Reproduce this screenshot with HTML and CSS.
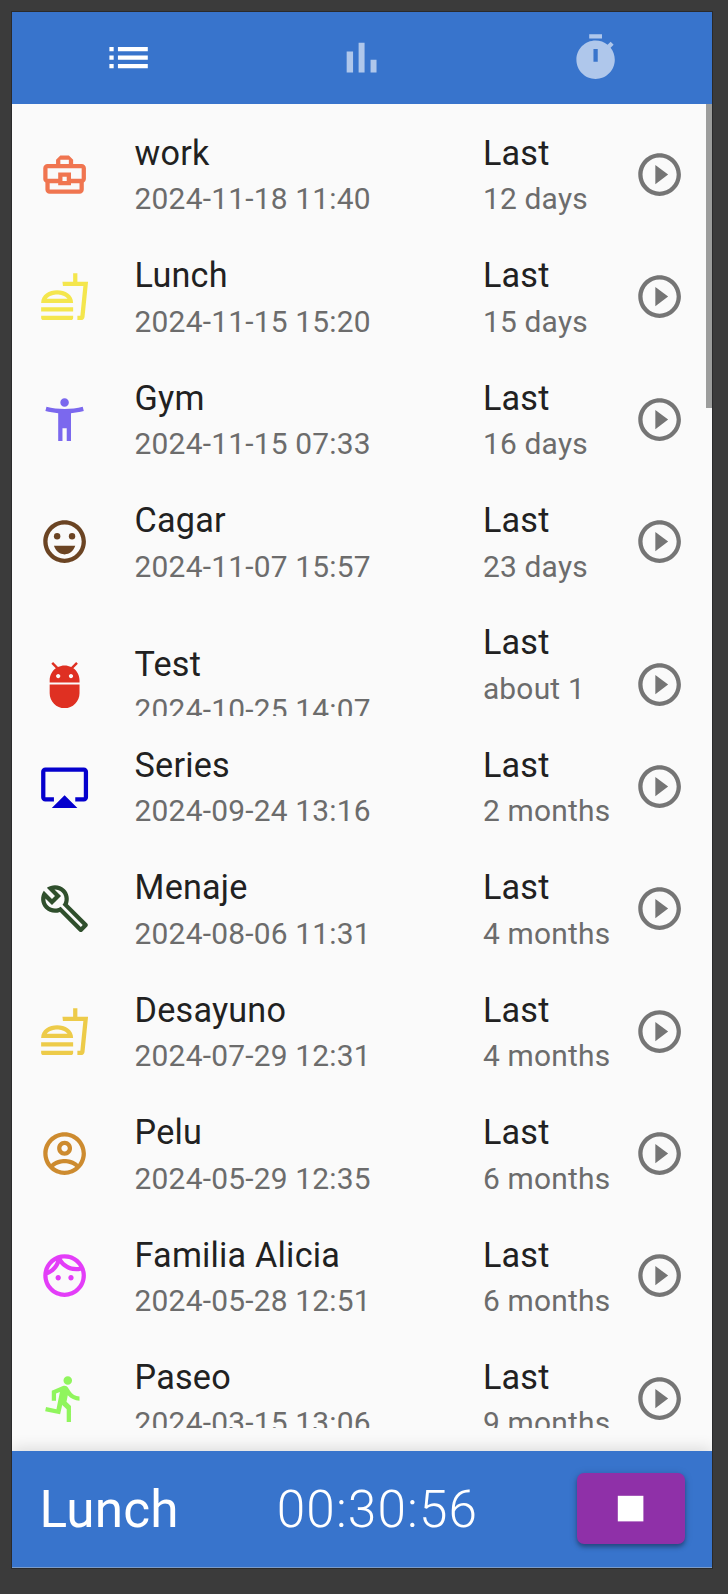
FILE: index.html
```html
<!DOCTYPE html>
<html lang="en">
<head>
<meta charset="utf-8">
<title>Time tracker</title>
<link rel="stylesheet" href="styles.css">
</head>
<body>
<svg class="sprite" aria-hidden="true">
  <symbol id="play" viewBox="0 0 24 24"><path d="M10 16.5l6-4.5-6-4.5v9zM12 2C6.48 2 2 6.48 2 12s4.48 10 10 10 10-4.48 10-10S17.52 2 12 2zm0 18c-4.41 0-8-3.59-8-8s3.59-8 8-8 8 3.59 8 8-3.59 8-8 8z"/></symbol>
  <symbol id="food" viewBox="0 0 24 24"><path d="M1 21.98c0 .56.45 1.01 1.01 1.01H15c.56 0 1.01-.45 1.01-1.01V21H1v.98zM8.5 8.99C4.75 8.99 1 11 1 15h15c-.01-4.01-3.76-6.01-7.5-6.01zM3.62 13c1.11-1.55 3.47-2.01 4.88-2.01s3.77.46 4.88 2.01H3.62zM1 17h15v2H1zM18 5V1h-2v4h-5l.23 2h9.56l-1.4 14H18v2h1.72c.84 0 1.53-.65 1.63-1.47L23 5h-5z"/></symbol>
</svg>
<div class="app">
  <nav class="tabs">
    <a class="tab active"><svg class="icon" viewBox="0 0 24 24"><path d="M3 13h2v-2H3v2zm0 4h2v-2H3v2zm0-8h2V7H3v2zm4 4h14v-2H7v2zm0 4h14v-2H7v2zM7 7v2h14V7H7z"/></svg></a>
    <a class="tab"><svg class="icon" viewBox="0 0 24 24"><path d="M5 9.2h3V19H5zM10.6 5h2.8v14h-2.8zm5.6 8H19v6h-2.8z"/></svg></a>
    <a class="tab"><svg class="icon" viewBox="0 0 24 24"><path fill-rule="evenodd" d="M15 1H9v2h6V1zm-4 13h2V8h-2v6zm8.03-6.61l1.42-1.42c-.43-.51-.9-.99-1.41-1.41l-1.42 1.42C16.07 4.74 14.12 4 12 4c-4.97 0-9 4.03-9 9s4.02 9 9 9 9-4.03 9-9c0-2.12-.74-4.07-1.97-5.61z"/></svg></a>
  </nav>
  <main class="viewport">
    <ul class="list">
      <li class="row"><div class="inner">
        <svg class="icon coral" viewBox="0 0 24 24"><path d="M20 7h-4V5l-2-2h-4L8 5v2H4c-1.1 0-2 .9-2 2v5c0 .75.4 1.38 1 1.73V19c0 1.11.89 2 2 2h14c1.11 0 2-.89 2-2v-3.28c.59-.35 1-.99 1-1.72V9c0-1.1-.9-2-2-2zM10 5h4v2h-4V5zM4 9h16v5h-5v-3H9v3H4V9zm9 6h-2v-2h2v2zm6 4H5v-3h4v1h6v-1h4v3z"/></svg>
        <div class="text"><p class="title">work</p><p class="sub">2024-11-18 11:40</p></div>
        <div class="last"><p class="title">Last</p><p class="sub">12 days</p></div>
        <svg class="icon play"><use href="#play"/></svg>
      </div></li>
      <li class="row"><div class="inner">
        <svg class="icon yellow"><use href="#food"/></svg>
        <div class="text"><p class="title">Lunch</p><p class="sub">2024-11-15 15:20</p></div>
        <div class="last"><p class="title">Last</p><p class="sub">15 days</p></div>
        <svg class="icon play"><use href="#play"/></svg>
      </div></li>
      <li class="row"><div class="inner">
        <svg class="icon violet" viewBox="0 0 24 24"><path d="M20.5 6c-2.61.7-5.67 1-8.5 1s-5.89-.3-8.5-1L3 8c1.86.5 4 .83 6 1v13h2v-6h2v6h2V9c2-.17 4.14-.5 6-1l-.5-2zM12 6c1.1 0 2-.9 2-2s-.9-2-2-2-2 .9-2 2 .9 2 2 2z"/></svg>
        <div class="text"><p class="title">Gym</p><p class="sub">2024-11-15 07:33</p></div>
        <div class="last"><p class="title">Last</p><p class="sub">16 days</p></div>
        <svg class="icon play"><use href="#play"/></svg>
      </div></li>
      <li class="row"><div class="inner">
        <svg class="icon brown" viewBox="0 0 24 24"><circle cx="8.5" cy="9.5" r="1.5"/><circle cx="15.5" cy="9.5" r="1.5"/><path d="M12 18c2.28 0 4.22-1.66 5-4H7c.78 2.34 2.72 4 5 4zM12 2C6.48 2 2 6.48 2 12s4.48 10 10 10 10-4.48 10-10S17.52 2 12 2zm0 18c-4.41 0-8-3.59-8-8s3.59-8 8-8 8 3.59 8 8-3.59 8-8 8z"/></svg>
        <div class="text"><p class="title">Cagar</p><p class="sub">2024-11-07 15:57</p></div>
        <div class="last"><p class="title">Last</p><p class="sub">23 days</p></div>
        <svg class="icon play"><use href="#play"/></svg>
      </div></li>
      <li class="row"><div class="inner">
        <svg class="icon red" viewBox="0 0 24 24"><path d="M5 16c0 3.87 3.13 7 7 7s7-3.13 7-7v-4H5v4zM16.12 4.37l2.1-2.1-.82-.83-2.3 2.31C14.16 3.28 13.12 3 12 3s-2.16.28-3.09.75L6.6 1.44l-.82.83 2.1 2.1C6.14 5.64 5 7.68 5 10v1h14v-1c0-2.32-1.14-4.36-2.88-5.63zM9 9c-.55 0-1-.45-1-1s.45-1 1-1 1 .45 1 1-.45 1-1 1zm6 0c-.55 0-1-.45-1-1s.45-1 1-1 1 .45 1 1-.45 1-1 1z"/></svg>
        <div class="text"><p class="title">Test</p><p class="sub">2024-10-25 14:07</p></div>
        <div class="last"><p class="title">Last</p><p class="sub two-line">about 1</p></div>
        <svg class="icon play"><use href="#play"/></svg>
      </div></li>
      <li class="row"><div class="inner">
        <svg class="icon blue" viewBox="0 0 24 24"><path d="M6 22h12l-6-6zM21 3H3c-1.1 0-2 .9-2 2v12c0 1.1.9 2 2 2h4v-2H3V5h18v12h-4v2h4c1.1 0 2-.9 2-2V5c0-1.1-.9-2-2-2z"/></svg>
        <div class="text"><p class="title">Series</p><p class="sub">2024-09-24 13:16</p></div>
        <div class="last"><p class="title">Last</p><p class="sub">2 months</p></div>
        <svg class="icon play"><use href="#play"/></svg>
      </div></li>
      <li class="row"><div class="inner">
        <svg class="icon forest" viewBox="0 0 24 24"><path d="M22.61 18.99l-9.08-9.08c.93-2.34.45-5.1-1.44-7C9.79.61 6.21.4 3.66 2.26L7.5 6.11 6.08 7.52 2.25 3.69C.39 6.23.6 9.82 2.9 12.11c1.86 1.86 4.57 2.35 6.89 1.48l9.11 9.11c.39.39 1.02.39 1.41 0l2.3-2.3c.4-.38.4-1.01 0-1.41zm-3 1.6l-9.46-9.46c-.61.45-1.29.72-2 .82-1.36.2-2.79-.21-3.83-1.25C3.37 9.76 2.93 8.5 3 7.26l3.09 3.09 4.24-4.24-3.09-3.09c1.24-.07 2.49.37 3.44 1.31 1.08 1.08 1.49 2.57 1.24 3.96-.12.71-.42 1.37-.88 1.96l9.45 9.45-.88.89z"/></svg>
        <div class="text"><p class="title">Menaje</p><p class="sub">2024-08-06 11:31</p></div>
        <div class="last"><p class="title">Last</p><p class="sub">4 months</p></div>
        <svg class="icon play"><use href="#play"/></svg>
      </div></li>
      <li class="row"><div class="inner">
        <svg class="icon gold"><use href="#food"/></svg>
        <div class="text"><p class="title">Desayuno</p><p class="sub">2024-07-29 12:31</p></div>
        <div class="last"><p class="title">Last</p><p class="sub">4 months</p></div>
        <svg class="icon play"><use href="#play"/></svg>
      </div></li>
      <li class="row"><div class="inner">
        <svg class="icon ochre" viewBox="0 0 24 24"><path d="M12 2C6.48 2 2 6.48 2 12s4.48 10 10 10 10-4.48 10-10S17.52 2 12 2zM7.07 18.28c.43-.9 3.05-1.78 4.93-1.78s4.51.88 4.93 1.78C15.57 19.36 13.86 20 12 20s-3.57-.64-4.93-1.72zm11.29-1.45c-1.43-1.74-4.9-2.33-6.36-2.33s-4.93.59-6.36 2.33C4.62 15.49 4 13.82 4 12c0-4.41 3.59-8 8-8s8 3.59 8 8c0 1.82-.62 3.49-1.64 4.83zM12 6c-1.94 0-3.5 1.56-3.5 3.5S10.06 13 12 13s3.5-1.56 3.5-3.5S13.94 6 12 6zm0 5c-.83 0-1.5-.67-1.5-1.5S11.17 8 12 8s1.5.67 1.5 1.5S12.83 11 12 11z"/></svg>
        <div class="text"><p class="title">Pelu</p><p class="sub">2024-05-29 12:35</p></div>
        <div class="last"><p class="title">Last</p><p class="sub">6 months</p></div>
        <svg class="icon play"><use href="#play"/></svg>
      </div></li>
      <li class="row"><div class="inner">
        <svg class="icon magenta" viewBox="0 0 24 24"><path d="M10.25 13c0 .69-.56 1.25-1.25 1.25S7.75 13.69 7.75 13s.56-1.25 1.25-1.25 1.25.56 1.25 1.25zM15 11.75c-.69 0-1.25.56-1.25 1.25s.56 1.25 1.25 1.25 1.25-.56 1.25-1.25-.56-1.25-1.25-1.25zm7 .25c0 5.52-4.48 10-10 10S2 17.52 2 12 6.48 2 12 2s10 4.48 10 10zM10.66 4.12C12.06 6.44 14.6 8 17.5 8c.46 0 .91-.05 1.34-.12C17.44 5.56 14.9 4 12 4c-.46 0-.91.05-1.34.12zM4.42 9.47c1.71-.97 3.03-2.55 3.66-4.44C6.37 6 5.05 7.58 4.42 9.47zM20 12c0-.78-.12-1.53-.33-2.24-.7.15-1.42.24-2.17.24-3.13 0-5.92-1.44-7.76-3.69C8.69 8.87 6.6 10.88 4 11.86c.01.04 0 .09 0 .14 0 4.42 3.58 8 8 8s8-3.58 8-8z"/></svg>
        <div class="text"><p class="title">Familia Alicia</p><p class="sub">2024-05-28 12:51</p></div>
        <div class="last"><p class="title">Last</p><p class="sub">6 months</p></div>
        <svg class="icon play"><use href="#play"/></svg>
      </div></li>
      <li class="row"><div class="inner">
        <svg class="icon lime" viewBox="0 0 24 24"><path d="M13.49 5.48c1.1 0 2-.9 2-2s-.9-2-2-2-2 .9-2 2 .9 2 2 2zm-3.6 13.9l1-4.4 2.1 2v6h2v-7.5l-2.1-2 .6-3c1.3 1.5 3.3 2.5 5.5 2.5v-2c-1.9 0-3.5-1-4.3-2.4l-1-1.6c-.4-.6-1-1-1.7-1-.3 0-.5.1-.8.1l-5.2 2.2v4.7h2v-3.4l1.8-.7-1.6 8.1-4.9-1-.4 2 7 1.4z"/></svg>
        <div class="text"><p class="title">Paseo</p><p class="sub">2024-03-15 13:06</p></div>
        <div class="last"><p class="title">Last</p><p class="sub">9 months</p></div>
        <svg class="icon play"><use href="#play"/></svg>
      </div></li>
    </ul>
    <div class="thumb"></div>
  </main>
  <footer class="bar">
    <span class="name">Lunch</span>
    <span class="clock">00:30:56</span>
    <button class="stop" aria-label="Stop"><svg class="icon" viewBox="0 0 24 24"><path d="M6 6h12v12H6z"/></svg></button>
  </footer>
</div>
</body>
</html>
```

FILE: styles.css
```css
* { box-sizing: border-box; }
body {
  margin: 0;
  height: 1594px;
  padding: 12px 16px 0 12px;
  overflow: hidden;
  background: #3b3b3b;
  font-family: Roboto, "Liberation Sans", sans-serif;
}
.sprite { position: absolute; width: 0; height: 0; }
.app {
  display: flex;
  flex-direction: column;
  width: 700px;
  height: 1556px;
  background: #fafafa;
  box-shadow: 0 0 0 1px #2a2a2b;
}
.icon { display: block; width: 51.2px; height: 51.2px; fill: currentColor; flex: none; }
.tabs {
  display: grid;
  grid-template-columns: repeat(3, 1fr);
  height: 91.6px;
  flex: none;
  background: #3874cc;
  color: #fff;
}
.tab { display: flex; align-items: center; justify-content: center; color: #afc7eb; }
.tab.active { color: #fff; }
.viewport {
  position: relative;
  height: 1347.4px;
  flex: none;
}
.list {
  display: flex;
  flex-direction: column;
  gap: 18.4px;
  height: 1324.4px;
  margin: 0;
  padding: 18.8px 0 0;
  overflow: hidden;
  list-style: none;
}
.row { height: 104px; flex: none; overflow: hidden; }
.inner {
  display: grid;
  grid-template-columns: 51.2px 348.6px 195.2px 51.2px;
  align-items: center;
  min-height: 104px;
  padding: 5px 27px 5px 27.1px;
}
.text { padding-left: 44.3px; }
.last { width: 130px; margin-left: 44px; }
.title, .sub { margin: 0; }
.title { padding-top: 0.3px; font-size: 34.2px; line-height: 51.3px; letter-spacing: 0.2px; color: #212121; }
.sub { margin-top: -0.9px; font-size: 29.9px; line-height: 42.7px; letter-spacing: 0.22px; color: #6c6c6c; }
.two-line { min-height: 85.4px; }
.play { color: #757575; }
.thumb {
  position: absolute;
  top: 0;
  right: 0;
  width: 6.5px;
  height: 304px;
  background: #9c9d9c;
}
.coral { color: #f07550; }
.yellow { color: #f4e64d; }
.violet { color: #7b68ee; }
.brown { color: #6b4423; }
.red { color: #df3022; }
.blue { color: #0500cd; }
.forest { color: #2f4f2c; }
.gold { color: #edcb49; }
.ochre { color: #cd8b2f; }
.magenta { color: #e33df8; }
.lime { color: #90f55d; }
.bar {
  position: relative;
  display: grid;
  grid-template-columns: 237.2px 1fr 108.5px;
  align-items: center;
  flex: 1;
  padding: 0 27px 0 27.5px;
  background: #3874cc;
  border-bottom: 1px solid #7b9cc9;
  color: #fff;
  box-shadow: 0 -3px 14px rgba(0, 0, 0, .12);
  clip-path: inset(-40px 0 0 0);
}
.name, .clock { padding-top: 2px; font-size: 51.3px; line-height: 68px; }
.name { letter-spacing: 0.2px; }
.clock { font-weight: 300; letter-spacing: 1.15px; }
.stop {
  display: flex;
  align-items: center;
  justify-content: center;
  height: 71px;
  padding: 0;
  border: 0;
  border-radius: 7px;
  background: #8f30a8;
  color: #fff;
  box-shadow: 0 3px 4px rgba(0, 0, 0, .3), 0 1px 8px rgba(0, 0, 0, .15);
}
```
